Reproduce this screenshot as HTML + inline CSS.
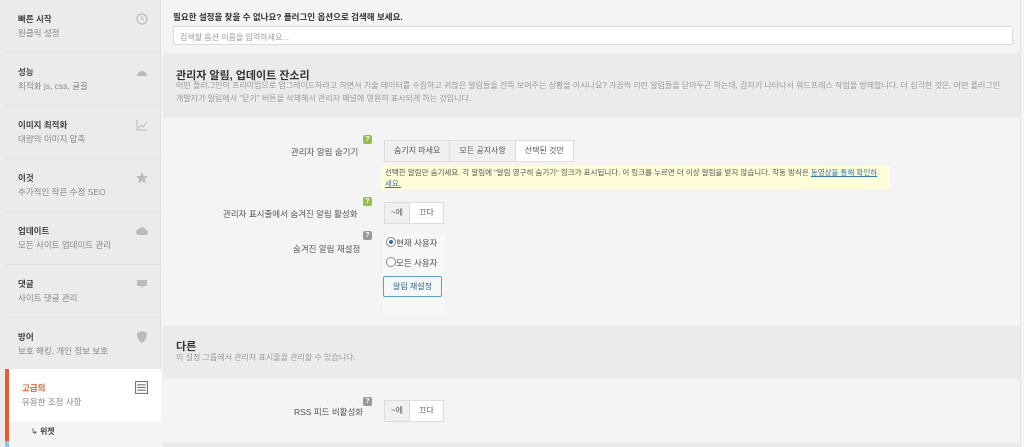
<!DOCTYPE html>
<html><head><meta charset="utf-8"><style>
*{margin:0;padding:0;box-sizing:border-box}
body{width:1024px;height:447px;overflow:hidden;background:#f4f4f4;font-family:"Liberation Sans","Noto Sans CJK KR",sans-serif;position:relative;color:#444}
.sb{position:absolute;left:0;top:0;width:161px;height:447px;background:#ebebeb;border-right:1px solid #e0e0e0}
.it{position:absolute;left:5px;width:156px;height:53px;border-bottom:1px solid #e3e3e3}
.it b{position:absolute;left:13px;top:13px;font-size:8.5px;color:#444}
.it span{position:absolute;left:13px;top:27px;font-size:8.5px;color:#888}
.ic{position:absolute;right:13px;top:13px;width:12px;height:12px;color:#bbb}
.act{background:#fff;border-left:4px solid #f05a28;left:5px}
.act b{color:#f05a28;left:13px}
.main{position:absolute;left:163px;top:0;width:857px;height:447px}
.lbl{position:absolute;font-size:8.5px;color:#444}
.sec{position:absolute;left:0;width:857px;background:#ebebeb}
.sec h3{position:absolute;left:13px;font-size:11px;color:#333}
.sec p{position:absolute;left:13px;font-size:8px;color:#999;line-height:13px;white-space:nowrap}
.btns{position:absolute;display:flex;border:1px solid #ddd;background:#fff;font-size:8px}
.btns div{padding:0 9px;line-height:20px;border-right:1px solid #ddd;color:#555}
.btns div:last-child{border-right:none}
.off{background:#f0f0f0}
.q{position:absolute;width:9px;height:9px;border-radius:2px;color:#fff;font-size:7px;text-align:center;line-height:9px;font-weight:bold}
.g{background:#8cc63f}.gr{background:#999}
</style></head><body>
<div class="sb">
<div class="it" style="top:0"><b>빠른 시작</b><span>원클릭 설정</span><svg class="ic" viewBox="0 0 12 12"><circle cx="6" cy="6" r="5" fill="none" stroke="#bbb" stroke-width="1.2"/><path d="M6 3v3l2 1" stroke="#bbb" fill="none"/></svg></div>
<div class="it" style="top:53px"><b>성능</b><span>최적화 js, css, 글꼴</span><svg class="ic" viewBox="0 0 12 12"><path d="M1 10a5 5 0 0 1 10 0z" fill="#bbb"/></svg></div>
<div class="it" style="top:106px"><b>이미지 최적화</b><span>대량의 이미지 압축</span><svg class="ic" viewBox="0 0 12 12"><path d="M1 1v10h10M2 9l3-3 2 2 4-5" stroke="#bbb" fill="none"/></svg></div>
<div class="it" style="top:159px"><b>이것</b><span>추가적인 작은 수정 SEO</span><svg class="ic" viewBox="0 0 12 12"><path d="M6 0l1.8 4 4.2.3-3.2 2.8 1 4.2L6 9 2.2 11.3l1-4.2L0 4.3 4.2 4z" fill="#bbb"/></svg></div>
<div class="it" style="top:212px"><b>업데이트</b><span>모든 사이트 업데이트 관리</span><svg class="ic" viewBox="0 0 12 12"><path d="M3 10a3 3 0 0 1 0-6 3.5 3.5 0 0 1 6.5 1A2.5 2.5 0 0 1 9.5 10z" fill="#bbb"/></svg></div>
<div class="it" style="top:265px"><b>댓글</b><span>사이트 댓글 관리</span><svg class="ic" viewBox="0 0 12 12"><path d="M1 2h10v6H7l-1 2-1-2H1z" fill="#bbb"/></svg></div>
<div class="it" style="top:318px"><b>방어</b><span>보호 해킹, 개인 정보 보호</span><svg class="ic" viewBox="0 0 12 12"><path d="M6 0l5 2c0 5-2 8-5 10C3 10 1 7 1 2z" fill="#bbb"/></svg></div>
<div class="it act" style="top:369px;height:52px;border-bottom:none"><b>고급의</b><span>유용한 조정 사항</span><svg class="ic" viewBox="0 0 12 12" style="top:12px;width:13px;height:13px"><rect x=".5" y=".5" width="11" height="11" fill="none" stroke="#777"/><path d="M2 3.5h8M2 6h8M2 8.5h8" stroke="#777"/></svg></div>
<div style="position:absolute;left:5px;top:421px;width:156px;height:26px;background:#f4f4f4;border-left:4px solid #f05a28"><span style="position:absolute;left:22px;top:5px;font-size:8px;color:#444">↳ <b>위젯</b></span></div>
<div style="position:absolute;left:5px;top:441px;width:4px;height:6px;background:#8ac6ec"></div>
</div>
<div class="main">
<div class="lbl" style="left:10px;top:11px;font-weight:bold;color:#333">필요한 설정을 찾을 수 없나요? 플러그인 옵션으로 검색해 보세요.</div>
<div style="position:absolute;left:10px;top:26px;width:840px;height:19px;background:#fff;border:1px solid #ddd;border-radius:2px;font-size:8px;color:#999;padding:5px 6px">검색할 옵션 이름을 입력하세요...</div>
<div class="sec" style="top:53px;height:65px"><h3 style="top:14px">관리자 알림, 업데이트 잔소리</h3><p style="top:26px">어떤 플러그인이 프리미엄으로 업그레이드하라고 하면서 기술 데이터를 수집하고 귀찮은 알림들을 잔뜩 보여주는 상황을 아시나요? 가끔씩 이런 알림들을 닫아두곤 하는데, 갑자기 나타나서 워드프레스 작업을 방해합니다. 더 심각한 것은, 어떤 플러그인<br>개발자가 알림에서 "닫기" 버튼을 삭제해서 관리자 패널에 영원히 표시되게 하는 것입니다.</p></div>
<div class="q g" style="left:200px;top:135px">?</div>
<div class="lbl" style="left:128px;top:146px;color:#555">관리자 알림 숨기기</div>
<div class="btns" style="left:221px;top:140px"><div class="off">숨기지 마세요</div><div class="off">모든 공지사항</div><div>선택된 것만</div></div>
<div style="position:absolute;left:218px;top:166px;width:509px;height:23px;background:#fffcd8;font-size:7.5px;color:#555;padding:1px 4px;line-height:11px">선택한 알림만 숨기세요. 각 알림에 "알림 영구히 숨기기" 링크가 표시됩니다. 이 링크를 누르면 더 이상 알림을 받지 않습니다. 작동 방식은 <u style="color:#2a7ab8">동영상을 통해 확인하<br>세요.</u></div>
<div class="q g" style="left:200px;top:197px">?</div>
<div class="lbl" style="left:60px;top:208px;color:#555">관리자 표시줄에서 숨겨진 알림 활성화</div>
<div class="btns" style="left:221px;top:202px"><div class="off" style="padding:0 6px">~에</div><div>끄다</div></div>
<div class="q gr" style="left:200px;top:231px">?</div>
<div class="lbl" style="left:130px;top:243px;color:#555">숨겨진 알림 재설정</div>
<div style="position:absolute;left:220px;top:234px;width:62px;height:80px;background:#f7f7f7"></div>
<div style="position:absolute;left:223px;top:237px;width:10px;height:10px;border:1px solid #888;border-radius:50%;background:#fff"><div style="margin:2px;width:4px;height:4px;border-radius:50%;background:#1e73be"></div></div>
<div class="lbl" style="left:233px;top:237px;color:#555">현재 사용자</div>
<div style="position:absolute;left:223px;top:257px;width:10px;height:10px;border:1px solid #888;border-radius:50%;background:#fff"></div>
<div class="lbl" style="left:233px;top:257px;color:#555">모든 사용자</div>
<div style="position:absolute;left:220px;top:276px;width:59px;height:21px;border:1px solid #5b9dd9;background:#f7f7f7;border-radius:2px;font-size:8px;color:#2a6496;text-align:center;line-height:19px">알림 재설정</div>
<div class="sec" style="top:326px;height:53px"><h3 style="top:12px">다른</h3><p style="top:25px">이 설정 그룹에서 관리자 표시줄을 관리할 수 있습니다.</p></div>
<div class="q gr" style="left:200px;top:397px">?</div>
<div class="lbl" style="left:131px;top:406px;color:#555">RSS 피드 비활성화</div>
<div class="btns" style="left:221px;top:400px"><div class="off" style="padding:0 6px">~에</div><div>끄다</div></div>
<div style="position:absolute;left:0;top:442px;width:857px;height:5px;background:#ebebeb"></div>
</div>
<div style="position:absolute;left:1020px;top:0;width:1px;height:447px;background:#e5e5e5"></div>
</body></html>
